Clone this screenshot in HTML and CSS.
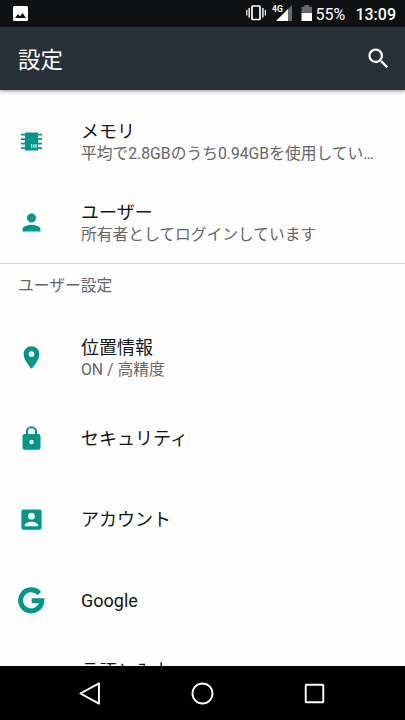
FILE: index.html
```
<!DOCTYPE html>
<html lang="ja">
<head>
<meta charset="utf-8">
<title>設定</title>
<link rel="stylesheet" href="styles.css">
</head>
<body>
<div class="screen">
  <header class="status">
    <svg class="status-photo" width="15" height="15" viewBox="0 0 15 15"><rect width="15" height="15" rx="1.5" fill="#fff"/><path d="M2 12l3-4 2 2.300L9.600 7 13 12z" fill="#101113"/></svg>
    <svg class="status-icons" width="70" height="20" viewBox="0 0 70 20">
      <g fill="none" stroke="#fff"><rect x="6" y="3" width="8" height="13.500" rx=".7" stroke-width="1.700"/><path d="M3.200 5v9.500M16.900 5v9.500" stroke-width="1.400"/><path d="M.8 7v5.500M19.400 7v5.500" stroke-width="1.200"/></g>
      <path d="M46 2v16H42V6z" fill="#68696a"/>
      <path d="M42 6v12H30z" fill="#fff"/>
      <text class="network" x="26" y="9.200">4G</text>
      <path d="M58.500 2h4.500v1.800h3V10H55.500V3.800h3z" fill="#68696a"/><path d="M55.500 10H66v8H55.500z" fill="#fff"/>
    </svg>
    <span class="battery">55%</span>
    <span class="clock">13:09</span>
  </header>
  <div class="toolbar">
    <h1>設定</h1>
    <svg class="search" width="27" height="27" viewBox="0 0 24 24" fill="#fff"><path d="M15.500 14h-.79l-.28-.27A6.471 6.471 0 0 0 16 9.500 6.500 6.500 0 1 0 9.500 16c1.610 0 3.090-.59 4.230-1.570l.27.28v.79l5 4.990L20.490 19l-4.990-5zm-6 0C7.010 14 5 11.990 5 9.500S7.010 5 9.500 5 14 7.010 14 9.500 11.990 14 9.500 14z"/></svg>
  </div>
  <main>
    <div class="row">
      <svg class="icon" viewBox="0 0 27 27"><path d="M7 4.500h13v18H7zM3 5.800h21v1.700H3zM3 10.200h21v1.700H3zM3 14.800h21v1.700H3zM3 19.200h21v1.700H3z"/><path d="M13 16.200h1.200v3.500H13zM15.200 16.200h1.200v3.500h-1.200zM17.400 16.200h1.200v3.500h-1.200z" fill="#fff"/></svg>
      <div class="text"><div class="title">メモリ</div><div class="sub">平均で2.8GBのうち0.94GBを使用しています</div></div>
    </div>
    <div class="row">
      <svg class="icon" viewBox="0 0 24 24"><path d="M12 12a4 4 0 1 0 0-8 4 4 0 0 0 0 8zm0 2c-2.670 0-8 1.340-8 4v2h16v-2c0-2.660-5.330-4-8-4z"/></svg>
      <div class="text"><div class="title">ユーザー</div><div class="sub">所有者としてログインしています</div></div>
    </div>
    <h2>ユーザー設定</h2>
    <div class="row">
      <svg class="icon" viewBox="0 0 24 24"><path d="M12 2C8.130 2 5 5.130 5 9c0 5.250 7 13 7 13s7-7.750 7-13c0-3.870-3.130-7-7-7zm0 9.500a2.500 2.500 0 1 1 0-5 2.500 2.500 0 0 1 0 5z"/></svg>
      <div class="text"><div class="title">位置情報</div><div class="sub">ON / 高精度</div></div>
    </div>
    <div class="row">
      <svg class="icon" viewBox="0 0 24 24"><path d="M18 8h-1V6A5 5 0 0 0 7 6v2H6a2 2 0 0 0-2 2v10a2 2 0 0 0 2 2h12a2 2 0 0 0 2-2V10a2 2 0 0 0-2-2zm-6 9a2 2 0 1 1 0-4 2 2 0 0 1 0 4zm3.100-9H8.900V6a3.100 3.100 0 0 1 6.200 0z"/></svg>
      <div class="text"><div class="title">セキュリティ</div></div>
    </div>
    <div class="row">
      <svg class="icon" viewBox="0 0 24 24"><path d="M3 5v14a2 2 0 0 0 2 2h14a2 2 0 0 0 2-2V5a2 2 0 0 0-2-2H5a2 2 0 0 0-2 2zm12 4a3 3 0 1 1-6 0 3 3 0 0 1 6 0zm-9 8c0-2 4-3.100 6-3.100s6 1.100 6 3.100v1H6z"/></svg>
      <div class="text"><div class="title">アカウント</div></div>
    </div>
    <div class="row">
      <svg class="icon" viewBox="0 0 27 27"><path d="M21.300 6.500A10.600 10.600 0 1 0 23.800 13.800H13.700" fill="none" stroke="#009688" stroke-width="5"/></svg>
      <div class="text"><div class="title">Google</div></div>
    </div>
    <div class="row">
      <div class="icon"></div>
      <div class="text"><div class="title">言語と入力</div><div class="sub">日本語</div></div>
    </div>
  </main>
  <nav>
    <svg viewBox="0 0 24 24"><path d="M19.500 3v18L3 12z"/></svg>
    <svg viewBox="0 0 24 24"><circle cx="12" cy="12" r="8.900"/></svg>
    <svg viewBox="0 0 24 24"><rect x="4.200" y="4.200" width="15.600" height="15.600" rx=".5"/></svg>
  </nav>
</div>
</body>
</html>
```
FILE: styles.css
```
body {
  margin: 0;
  font-family: Roboto, "Noto Sans CJK JP", sans-serif;
}

.screen {
  display: flex;
  flex-direction: column;
  width: 405px;
  height: 720px;
  overflow: hidden;
  background: #fefefe;
}

.status {
  display: flex;
  flex: none;
  align-items: center;
  box-sizing: border-box;
  height: 27px;
  padding: 0 9px 0 13px;
  background: #101113;
  color: #fff;
}

.status-icons {
  margin: 0 -1px 1px auto;
}

.network {
  fill: #fff;
  font-size: 8.500px;
  font-weight: 700;
}

.battery {
  width: 40px;
  font-size: 16px;
  line-height: 27px;
  padding-top: 2px;
}

.clock {
  font-size: 16px;
  font-weight: 500;
  line-height: 27px;
  padding-top: 2px;
}

.toolbar {
  display: flex;
  flex: none;
  z-index: 1;
  align-items: center;
  justify-content: space-between;
  box-sizing: border-box;
  height: 63px;
  padding: 0 13px 0 18px;
  background: #263238;
  box-shadow: 0 1px 4px rgba(0, 0, 0, 0.45);
}

h1 {
  margin: 0 0 2px;
  color: #fff;
  font-size: 22.500px;
  font-weight: 400;
}

main {
  flex: 1;
  min-height: 0;
  padding-top: 11px;
  overflow: hidden;
}

.row {
  display: flex;
  align-items: center;
  height: 81px;
  padding: 0 27px 0 18px;
}

.icon {
  flex: none;
  width: 27px;
  height: 27px;
  margin-right: 36px;
  fill: #009688;
}

.text {
  min-width: 0;
}

.title {
  color: #151515;
  font-size: 18px;
  line-height: 24px;
}

.title:not(:last-child) {
  padding-top: 1px;
  margin-bottom: -1px;
}

.sub {
  overflow: hidden;
  color: #666;
  font-size: 15.750px;
  line-height: 22px;
  text-overflow: ellipsis;
  white-space: nowrap;
}

h2 {
  box-sizing: border-box;
  height: 54px;
  margin: 0;
  padding-left: 18px;
  border-top: 1px solid #dadada;
  color: #666;
  font-size: 15.750px;
  font-weight: 400;
  line-height: 44px;
}

nav {
  display: flex;
  flex: none;
  align-items: center;
  justify-content: center;
  gap: 85px;
  height: 54px;
  background: #000;
}

nav svg {
  width: 27px;
  height: 27px;
  fill: none;
  stroke: #fff;
  stroke-width: 1.700;
  stroke-linejoin: round;
}
```
